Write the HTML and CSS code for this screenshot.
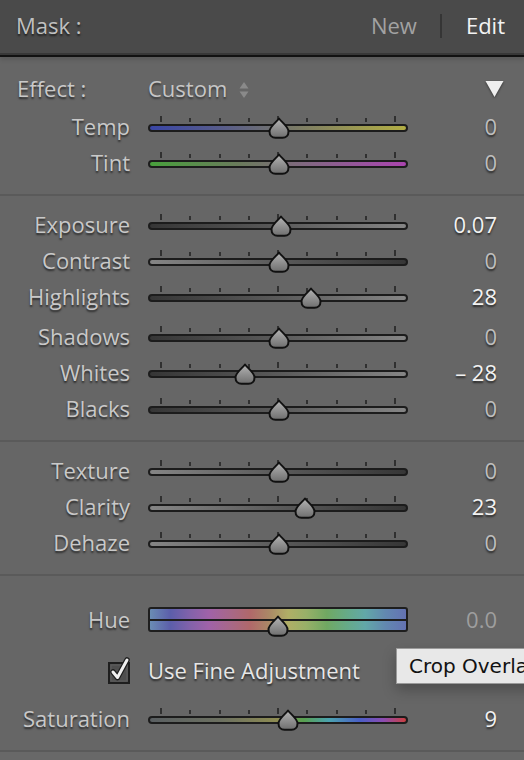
FILE: index.html
```html
<!DOCTYPE html>
<html>
<head>
<meta charset="utf-8">
<link rel="stylesheet" href="styles.css">
</head>
<body>
<svg class="defs" width="0" height="0">
  <defs>
    <linearGradient id="thumbfill" x1="0" y1="0" x2="0" y2="1">
      <stop offset="0" stop-color="#b4b4b4"/>
      <stop offset="1" stop-color="#6e6e6e"/>
    </linearGradient>
    <symbol id="thumb" viewBox="0 0 22 22">
      <path d="M11 1.5 C13.5 5 20.5 9.5 20.5 14.5 C20.5 18.5 18 20.8 14.5 20.8 L7.5 20.8 C4 20.8 1.5 18.5 1.5 14.5 C1.5 9.5 8.5 5 11 1.5 Z" fill="url(#thumbfill)" stroke="#111" stroke-width="2" stroke-linejoin="round"/>
    </symbol>
  </defs>
</svg>
<div class="panel">
  <header class="head">
    <span class="title">Mask :</span>
    <nav class="modes">
      <span class="mode">New</span>
      <span class="divider"></span>
      <span class="mode active">Edit</span>
    </nav>
  </header>

  <section class="group g1">
    <div class="row effect">
      <span class="label left">Effect :</span>
      <span class="select">Custom
        <svg class="updown" width="10" height="18" viewBox="0 0 10 18"><path d="M5 1 L9.5 7.5 L0.5 7.5 Z M5 17 L9.5 10.5 L0.5 10.5 Z" fill="#8a8a8a"/></svg>
      </span>
      <svg class="disclose" width="19" height="18" viewBox="0 0 19 18"><path d="M0.5 1 L18.5 1 L9.5 17 Z" fill="#efefef"/></svg>
    </div>
    <div class="row">
      <span class="label">Temp</span>
      <div class="slider"><div class="ticks"><i class="t big"></i><i class="t"></i><i class="t"></i><i class="t"></i><i class="t big"></i><i class="t"></i><i class="t"></i><i class="t"></i><i class="t big"></i></div><div class="track temp"></div><svg class="thumb" style="left:120px"><use href="#thumb"/></svg></div>
      <span class="value zero">0</span>
    </div>
    <div class="row">
      <span class="label">Tint</span>
      <div class="slider"><div class="ticks"><i class="t big"></i><i class="t"></i><i class="t"></i><i class="t"></i><i class="t big"></i><i class="t"></i><i class="t"></i><i class="t"></i><i class="t big"></i></div><div class="track tint"></div><svg class="thumb" style="left:120px"><use href="#thumb"/></svg></div>
      <span class="value zero">0</span>
    </div>
  </section>

  <section class="group g2">
    <div class="row">
      <span class="label">Exposure</span>
      <div class="slider"><div class="ticks"><i class="t big"></i><i class="t"></i><i class="t"></i><i class="t"></i><i class="t big"></i><i class="t"></i><i class="t"></i><i class="t"></i><i class="t big"></i></div><div class="track dark-light"></div><svg class="thumb" style="left:122px"><use href="#thumb"/></svg></div>
      <span class="value">0.07</span>
    </div>
    <div class="row">
      <span class="label">Contrast</span>
      <div class="slider"><div class="ticks"><i class="t big"></i><i class="t"></i><i class="t"></i><i class="t"></i><i class="t big"></i><i class="t"></i><i class="t"></i><i class="t"></i><i class="t big"></i></div><div class="track light-dark"></div><svg class="thumb" style="left:120px"><use href="#thumb"/></svg></div>
      <span class="value zero">0</span>
    </div>
    <div class="row">
      <span class="label">Highlights</span>
      <div class="slider"><div class="ticks"><i class="t big"></i><i class="t"></i><i class="t"></i><i class="t"></i><i class="t big"></i><i class="t"></i><i class="t"></i><i class="t"></i><i class="t big"></i></div><div class="track dark-light"></div><svg class="thumb" style="left:152px"><use href="#thumb"/></svg></div>
      <span class="value">28</span>
    </div>
    <div class="row spaced">
      <span class="label">Shadows</span>
      <div class="slider"><div class="ticks"><i class="t big"></i><i class="t"></i><i class="t"></i><i class="t"></i><i class="t big"></i><i class="t"></i><i class="t"></i><i class="t"></i><i class="t big"></i></div><div class="track dark-light"></div><svg class="thumb" style="left:120px"><use href="#thumb"/></svg></div>
      <span class="value zero">0</span>
    </div>
    <div class="row">
      <span class="label">Whites</span>
      <div class="slider"><div class="ticks"><i class="t big"></i><i class="t"></i><i class="t"></i><i class="t"></i><i class="t big"></i><i class="t"></i><i class="t"></i><i class="t"></i><i class="t big"></i></div><div class="track dark-light"></div><svg class="thumb" style="left:86px"><use href="#thumb"/></svg></div>
      <span class="value">– 28</span>
    </div>
    <div class="row">
      <span class="label">Blacks</span>
      <div class="slider"><div class="ticks"><i class="t big"></i><i class="t"></i><i class="t"></i><i class="t"></i><i class="t big"></i><i class="t"></i><i class="t"></i><i class="t"></i><i class="t big"></i></div><div class="track dark-light"></div><svg class="thumb" style="left:120px"><use href="#thumb"/></svg></div>
      <span class="value zero">0</span>
    </div>
  </section>

  <section class="group g3">
    <div class="row">
      <span class="label">Texture</span>
      <div class="slider"><div class="ticks"><i class="t big"></i><i class="t"></i><i class="t"></i><i class="t"></i><i class="t big"></i><i class="t"></i><i class="t"></i><i class="t"></i><i class="t big"></i></div><div class="track light-dark"></div><svg class="thumb" style="left:120px"><use href="#thumb"/></svg></div>
      <span class="value zero">0</span>
    </div>
    <div class="row">
      <span class="label">Clarity</span>
      <div class="slider"><div class="ticks"><i class="t big"></i><i class="t"></i><i class="t"></i><i class="t"></i><i class="t big"></i><i class="t"></i><i class="t"></i><i class="t"></i><i class="t big"></i></div><div class="track light-dark"></div><svg class="thumb" style="left:146px"><use href="#thumb"/></svg></div>
      <span class="value">23</span>
    </div>
    <div class="row">
      <span class="label">Dehaze</span>
      <div class="slider"><div class="ticks"><i class="t big"></i><i class="t"></i><i class="t"></i><i class="t"></i><i class="t big"></i><i class="t"></i><i class="t"></i><i class="t"></i><i class="t big"></i></div><div class="track light-dark"></div><svg class="thumb" style="left:120px"><use href="#thumb"/></svg></div>
      <span class="value zero">0</span>
    </div>
  </section>

  <section class="group g4">
    <div class="row hue-row">
      <span class="label">Hue</span>
      <div class="slider hue"><div class="huebar"><div class="hueband"></div><div class="hueband"></div></div><svg class="thumb" style="left:119px"><use href="#thumb"/></svg></div>
      <span class="value dim">0.0</span>
    </div>
    <div class="row check-row">
      <span class="label">
        <svg class="check" width="24" height="28" viewBox="0 0 24 28">
          <rect x="1" y="7" width="20" height="20" fill="#4e4e4e" stroke="#1e1e1e" stroke-width="2"/>
          <rect x="3" y="9" width="16" height="16" fill="none" stroke="#5e5e5e" stroke-width="1"/>
          <path d="M5 16 L9.5 21.5 L19 4" fill="none" stroke="#1e1e1e" stroke-width="5.5" stroke-linecap="round" stroke-linejoin="round"/>
          <path d="M5 16 L9.5 21.5 L19 4" fill="none" stroke="#f0f0f0" stroke-width="3" stroke-linecap="round" stroke-linejoin="round"/>
        </svg>
      </span>
      <span class="check-text">Use Fine Adjustment</span>
    </div>
    <div class="row sat-row">
      <span class="label">Saturation</span>
      <div class="slider"><div class="ticks"><i class="t big"></i><i class="t"></i><i class="t"></i><i class="t"></i><i class="t big"></i><i class="t"></i><i class="t"></i><i class="t"></i><i class="t big"></i></div><div class="track sat"></div><svg class="thumb" style="left:129px"><use href="#thumb"/></svg></div>
      <span class="value">9</span>
    </div>
  </section>
  <div class="foot"></div>

  <div class="tooltip">Crop Overlay</div>
</div>
</body>
</html>
```

FILE: styles.css
```css
html, body {
  margin: 0;
  padding: 0;
}
body {
  width: 524px;
  height: 760px;
  overflow: hidden;
  background: #666666;
  font-family: "Open Sans", "Noto Sans", sans-serif;
}
.defs {
  position: absolute;
  width: 0;
  height: 0;
}
.panel {
  position: relative;
  width: 524px;
  height: 760px;
  background: #666666;
  overflow: hidden;
}
.head {
  box-sizing: border-box;
  height: 57px;
  background: #4a4a4a;
  border-bottom: 2px solid #121212;
  box-shadow: inset 0 -2px 0 #383838, 0 3px 4px rgba(0,0,0,0.12);
  display: flex;
  align-items: center;
  justify-content: space-between;
  padding: 0 19px 6px 16px;
  font-size: 22px;
}
.title {
  color: #c0c0c0;
  text-shadow: 0 2px 2px rgba(0,0,0,0.6);
}
.modes {
  display: flex;
  align-items: center;
}
.mode {
  color: #a2a2a2;
}
.mode.active {
  color: #f3f3f3;
}
.divider {
  width: 2px;
  height: 24px;
  background: #353535;
  margin: 2px 24px 0 23px;
}
.group {
  border-bottom: 2px solid #5a5a5a;
}
.g1 {
  padding: 15px 0 12px;
}
.g2, .g3 {
  padding: 12px 0 12px;
}
.g4 {
  padding: 25px 0 12px;
}
.row {
  display: flex;
  align-items: center;
  height: 36px;
}
.g1 .effect {
  margin-bottom: 2px;
}
.row.spaced {
  margin-top: 4px;
}
.label {
  box-sizing: border-box;
  width: 130px;
  text-align: right;
  color: #c9c9c9;
  font-size: 22px;
  line-height: 36px;
  padding-bottom: 4px;
  text-shadow: 0 2px 2px rgba(0,0,0,0.6);
  white-space: nowrap;
}
.label.left {
  text-align: left;
  padding-left: 17px;
}
.hue-row .label,
.hue-row .value {
  padding-bottom: 0;
}
.select {
  margin-left: 18px;
  color: #c6c6c6;
  font-size: 22px;
  padding-bottom: 4px;
  text-shadow: 0 2px 2px rgba(0,0,0,0.45);
  display: flex;
  align-items: center;
  gap: 12px;
}
.updown {
  display: block;
  margin-top: 4px;
}
.disclose {
  margin-left: auto;
  margin-right: 20px;
  margin-top: -2px;
  filter: drop-shadow(0 1px 1px rgba(0,0,0,0.5));
}
.slider {
  position: relative;
  box-sizing: border-box;
  width: 260px;
  height: 36px;
  margin-left: 18px;
  padding-top: 6px;
}
.ticks {
  box-sizing: border-box;
  height: 6px;
  padding: 0 12px;
  display: flex;
  justify-content: space-between;
  align-items: flex-end;
}
.t {
  display: block;
  width: 2px;
  height: 4px;
  background: #303030;
}
.t.big {
  height: 6px;
}
.track {
  box-sizing: border-box;
  margin-top: 2px;
  height: 8px;
  border: 2px solid #1c1c1c;
  border-radius: 4px;
}
.track.temp {
  background: linear-gradient(90deg, #3a46a6, #5a5e88 30%, #787868 55%, #9a9852 80%, #b2ae44);
}
.track.tint {
  background: linear-gradient(90deg, #48a03c, #6a7a5c 35%, #806880 60%, #9a52a0 85%, #aa44ae);
}
.track.dark-light {
  background: linear-gradient(90deg, #363636, #5a5a5a 50%, #858585);
}
.track.light-dark {
  background: linear-gradient(90deg, #858585, #5a5a5a 50%, #363636);
}
.track.sat {
  background: linear-gradient(90deg, #5a5f62 0%, #6c7060 28%, #8e8c52 50%, #58a050 60%, #4aa2b0 70%, #4a5ec6 82%, #8a4cb2 91%, #cc4040 100%);
}
.thumb {
  position: absolute;
  top: 7px;
  width: 22px;
  height: 22px;
}
.slider.hue {
  padding-top: 6px;
}
.huebar {
  box-sizing: border-box;
  height: 25px;
  border: 2px solid #1e1e1e;
  border-radius: 3px;
  display: flex;
  flex-direction: column;
  gap: 2px;
  background: #1e1e1e;
  overflow: hidden;
}
.hueband {
  flex: 1;
  background: linear-gradient(90deg, #6a8cb4 0%, #5c5eaa 8%, #8462aa 16%, #a062a8 23%, #a86886 32%, #b0686a 39%, #aa8a66 47%, #b0ae66 54%, #98b068 61%, #70a862 69%, #66aa88 77%, #62a8a8 84%, #6288b0 92%, #6472b2 100%);
}
.slider.hue .thumb {
  top: 14px;
}
.value {
  width: 89px;
  text-align: right;
  color: #f2f2f2;
  font-size: 22px;
  padding-bottom: 4px;
  text-shadow: 0 2px 2px rgba(0,0,0,0.6);
}
.value.zero {
  color: #bebebe;
}
.value.dim {
  color: #9e9e9e;
  text-shadow: none;
}
.check-row {
  margin-top: 17px;
}
.check-row .label {
  display: flex;
  justify-content: flex-end;
  align-items: center;
  padding-bottom: 4px;
}
.check {
  display: block;
  margin-right: -2px;
}
.check-text {
  margin-left: 18px;
  color: #e6e6e6;
  font-size: 22px;
  padding-bottom: 4px;
  text-shadow: 0 2px 2px rgba(0,0,0,0.6);
}
.sat-row {
  margin-top: 12px;
}
.foot {
  height: 8px;
  background: #686868;
}
.tooltip {
  position: absolute;
  left: 396px;
  top: 648px;
  box-sizing: border-box;
  height: 36px;
  padding: 5px 12px 0;
  background: #e8e8e8;
  border: 1px solid #9a9a9a;
  color: #111;
  font-family: "DejaVu Sans", "Liberation Sans", sans-serif;
  font-size: 20px;
  white-space: nowrap;
  box-shadow: 0 6px 14px rgba(0,0,0,0.25);
}
```
